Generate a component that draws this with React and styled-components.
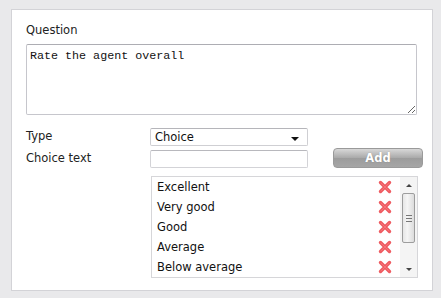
import React from 'react';
import styled, { createGlobalStyle } from 'styled-components';

const GlobalStyle = createGlobalStyle`
  html, body { margin: 0; padding: 0; background: #e9e9eb; }
  body { font-family: "DejaVu Sans", Verdana, sans-serif; }
`;

const choices = ['Excellent', 'Very good', 'Good', 'Average', 'Below average'];

function RemoveIcon() {
  return (
    <svg width="14" height="14" viewBox="0 0 14 14">
      <path d="M2.5 2.5 L11.5 11.5 M11.5 2.5 L2.5 11.5" stroke="#ef5a60" strokeWidth="3.4" strokeLinecap="round" />
      <path d="M3 3 L11 11 M11 3 L3 11" stroke="#f7868a" strokeWidth="1" strokeLinecap="round" opacity="0.6" />
    </svg>
  );
}

export default function App() {
  return (
    <Page>
      <GlobalStyle />
      <Panel>
        <Label>Question</Label>
        <TextArea defaultValue="Rate the agent overall" />
        <Form>
          <FieldLabel $row={1}>Type</FieldLabel>
          <Select>
            <span>Choice</span>
            <Caret />
          </Select>
          <FieldLabel $row={2}>Choice text</FieldLabel>
          <Input />
          <AddButton type="button">Add</AddButton>
          <List>
            <Items>
              {choices.map((c) => (
                <Item key={c}>
                  <span>{c}</span>
                  <RemoveIcon />
                </Item>
              ))}
            </Items>
            <Scrollbar>
              <Arrow $up />
              <Thumb>
                <Grip />
              </Thumb>
              <Track />
              <Arrow />
            </Scrollbar>
          </List>
        </Form>
      </Panel>
    </Page>
  );
}

const Page = styled.div`
  width: 441px;
  height: 298px;
  padding: 9px 0 0 11px;
  box-sizing: border-box;
`;

const Panel = styled.div`
  width: 422px;
  height: 282px;
  box-sizing: border-box;
  background: #fff;
  border: 1px solid #d3d3d7;
  padding: 13px 0 0 14px;
  display: flex;
  flex-direction: column;
`;

const Label = styled.div`
  font-size: 11.5px;
  color: #222;
  line-height: 14px;
  margin-bottom: 7px;
`;

const TextArea = styled.textarea`
  width: 391px;
  height: 71px;
  box-sizing: border-box;
  border: 1px solid #c6c6cc;
  border-top-color: #adadb3;
  border-radius: 2px;
  padding: 4px 3px;
  font-family: "Liberation Mono", "Courier New", monospace;
  font-size: 11.7px;
  color: #111;
  resize: vertical;
  outline: none;
`;

const Form = styled.div`
  display: grid;
  grid-template-columns: 124px 158px 25px 90px;
  grid-template-rows: 18px 18px auto;
  row-gap: 4px;
  margin-top: 13px;
  align-items: center;
`;

const FieldLabel = styled.div`
  grid-column: 1;
  grid-row: ${(p) => p.$row};
  font-size: 11.5px;
  line-height: 14px;
  margin-top: -2px;
  color: #222;
`;

const Select = styled.div`
  grid-column: 2;
  grid-row: 1;
  height: 18px;
  box-sizing: border-box;
  border: 1px solid #cfcfd3;
  border-top-color: #b5b5ba;
  border-radius: 2px;
  display: flex;
  align-items: center;
  justify-content: space-between;
  padding: 0 8px 0 4px;
  font-size: 11.5px;
  color: #111;
`;

const Caret = styled.span`
  width: 0;
  height: 0;
  margin-top: 3px;
  border-left: 4px solid transparent;
  border-right: 4px solid transparent;
  border-top: 4px solid #111;
`;

const Input = styled.input`
  grid-column: 2;
  grid-row: 2;
  height: 18px;
  width: 158px;
  box-sizing: border-box;
  border: 1px solid #d3d3d7;
  border-top-color: #b8b8bd;
  border-radius: 2px;
  outline: none;
`;

const AddButton = styled.button`
  grid-column: 4;
  grid-row: 2;
  width: 90px;
  height: 20px;
  align-self: start;
  margin-top: -2px;
  border: 1px solid #9a9a9a;
  border-radius: 4px;
  background: linear-gradient(#d8d8d8, #a9a9a9 50%, #9c9c9c 51%, #a6a6a6);
  color: #fff;
  font-family: "DejaVu Sans", Verdana, sans-serif;
  font-weight: bold;
  font-size: 11.5px;
  padding: 0;
  text-shadow: 0 0 1px rgba(0,0,0,0.25);
`;

const List = styled.div`
  grid-column: 2 / span 3;
  grid-row: 3;
  margin: 4px 0 0 1px;
  width: 267px;
  height: 102px;
  box-sizing: border-box;
  border: 1px solid #d6d6d9;
  display: flex;
`;

const Items = styled.div`
  flex: 1;
`;

const Item = styled.div`
  height: 20px;
  display: flex;
  align-items: center;
  justify-content: space-between;
  padding: 0 8px 0 5px;
  font-size: 11.5px;
  color: #111;
`;

const Scrollbar = styled.div`
  width: 17px;
  display: flex;
  flex-direction: column;
  align-items: center;
  background: #f4f4f4;
`;

const Arrow = styled.div`
  height: 16px;
  width: 17px;
  display: flex;
  align-items: center;
  justify-content: center;
  &::after {
    content: '';
    border-left: 3px solid transparent;
    border-right: 3px solid transparent;
    ${(p) => (p.$up ? 'border-bottom: 3px solid #444;' : 'border-top: 3px solid #444;')}
  }
`;

const Thumb = styled.div`
  width: 13px;
  height: 50px;
  box-sizing: border-box;
  border: 1px solid #9d9d9d;
  border-radius: 2px;
  background: linear-gradient(90deg, #e6e6e6, #f5f5f5 40%, #dcdcdc);
  display: flex;
  align-items: center;
  justify-content: center;
`;

const Grip = styled.div`
  width: 6px;
  height: 5px;
  border-top: 1px solid #777;
  border-bottom: 1px solid #777;
  position: relative;
  &::after {
    content: '';
    position: absolute;
    left: 0;
    right: 0;
    top: 2px;
    border-top: 1px solid #777;
  }
`;

const Track = styled.div`
  flex: 1;
`;
